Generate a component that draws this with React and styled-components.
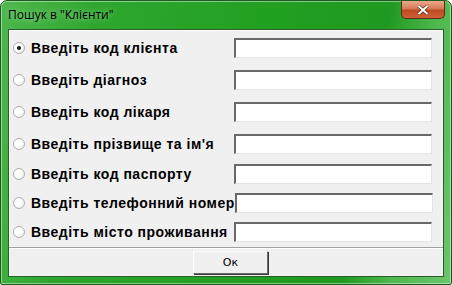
import React from 'react'
import styled, { createGlobalStyle } from 'styled-components'

const GlobalStyle = createGlobalStyle`
  html, body { margin:0; padding:0; background:#fff; }
  body { width:452px; height:285px; overflow:hidden; }
`

const Window = styled.div`
  width:452px;
  height:285px;
  box-sizing:border-box;
  display:flex;
  flex-direction:column;
  padding:0 7px 8px 7px;
  border:1px solid #1d5a1d;
  border-radius:7px 7px 2px 2px;
  background:linear-gradient(100deg, #4db84d 0%, #2ea62e 20%, #22a022 55%, #1f991f 78%, #4fb84f 88%, #6cc56c 100%);
  box-shadow:inset 0 0 0 1px rgba(255,255,255,0.45);
`

const TitleBar = styled.div`
  height:28px;
  flex:none;
  display:flex;
  align-items:flex-start;
  justify-content:space-between;
`

const Title = styled.div`
  font-family:"Open Sans","DejaVu Sans",sans-serif;
  font-size:12px;
  color:#000;
  padding:5px 0 0 0;
  text-shadow:0 0 6px rgba(255,255,255,0.6);
`

const CloseBtn = styled.div`
  width:44px;
  height:18px;
  margin-right:-1px;
  box-sizing:border-box;
  border:1px solid #5a2a1a;
  border-top:none;
  border-radius:0 0 5px 5px;
  background:linear-gradient(#eaa88c 0%, #d67a55 45%, #bd4a22 55%, #cf6038 100%);
  display:flex;
  align-items:center;
  justify-content:center;
`

const Client = styled.div`
  flex:1;
  display:flex;
  flex-direction:column;
  background:#f0f0f0;
  border:1px solid #2c5e2c;
  box-shadow:inset 1px 1px 0 #fff;
`

const Form = styled.div`
  display:flex;
  flex-direction:column;
  padding:2px 11px 0 4px;
`

const Row = styled.label`
  height:${p => p.h}px;
  display:flex;
  align-items:center;
  justify-content:space-between;
`

const Choice = styled.span`
  display:flex;
  align-items:center;
  gap:6px;
  white-space:nowrap;
`

const Radio = styled.span`
  width:12px;
  height:12px;
  box-sizing:border-box;
  border-radius:50%;
  border:1px solid #b0b0b0;
  background:radial-gradient(circle at 40% 40%, #fff 40%, #e0e0e0 100%);
  display:flex;
  align-items:center;
  justify-content:center;
  &::after{
    content:"";
    width:4px;
    height:4px;
    border-radius:50%;
    background:${p => (p.checked ? '#1a1a1a' : 'transparent')};
  }
`

const Label = styled.span`
  font-family:"Liberation Sans",Arial,sans-serif;
  font-weight:bold;
  font-size:14px;
  color:#000;
  letter-spacing:0.5px;
`

const Field = styled.div`
  width:198px;
  height:20px;
  flex:none;
  box-sizing:border-box;
  background:#fff;
  border-top:2px solid #696969;
  border-left:2px solid #696969;
  border-right:1px solid #e3e3e3;
  border-bottom:1px solid #e3e3e3;
`

const Footer = styled.div`
  margin-top:auto;
  border-top:1px solid #a0a0a0;
  box-shadow:inset 0 1px 0 #fff;
  display:flex;
  justify-content:center;
  padding:3px 0 2px 9px;
`

const Button = styled.div`
  width:75px;
  height:23px;
  box-sizing:border-box;
  background:#f0f0f0;
  border-top:1px solid #fff;
  border-left:1px solid #fff;
  border-right:1px solid #6a6a6a;
  border-bottom:1px solid #6a6a6a;
  box-shadow:1px 1px 0 #3a3a3a;
  display:flex;
  align-items:center;
  justify-content:center;
  font-family:"DejaVu Sans",sans-serif;
  font-size:11px;
  color:#000;
`

const rows = [
  { text: 'Введіть код клієнта', h: 32, checked: true },
  { text: 'Введіть діагноз', h: 32 },
  { text: 'Введіть код лікаря', h: 32 },
  { text: "Введіть прізвище та ім'я", h: 31 },
  { text: 'Введіть код паспорту', h: 29 },
  { text: 'Введіть телефонний номер', h: 29 },
  { text: 'Введіть місто проживання', h: 30 },
]

const App = () => {
  return (
    <>
      <GlobalStyle />
      <Window>
        <TitleBar>
          <Title>Пошук в "Клієнти"</Title>
          <CloseBtn>
            <svg width="12" height="10" viewBox="0 0 12 10">
              <path d="M1.5 1 L10.5 9 M10.5 1 L1.5 9" stroke="#4a2010" strokeWidth="3.2" />
              <path d="M1.5 1 L10.5 9 M10.5 1 L1.5 9" stroke="#fff" strokeWidth="2" />
            </svg>
          </CloseBtn>
        </TitleBar>
        <Client>
          <Form>
            {rows.map(r => (
              <Row key={r.text} h={r.h}>
                <Choice>
                  <Radio checked={r.checked} />
                  <Label>{r.text}</Label>
                </Choice>
                <Field />
              </Row>
            ))}
          </Form>
          <Footer>
            <Button>Ок</Button>
          </Footer>
        </Client>
      </Window>
    </>
  )
}

export default App
